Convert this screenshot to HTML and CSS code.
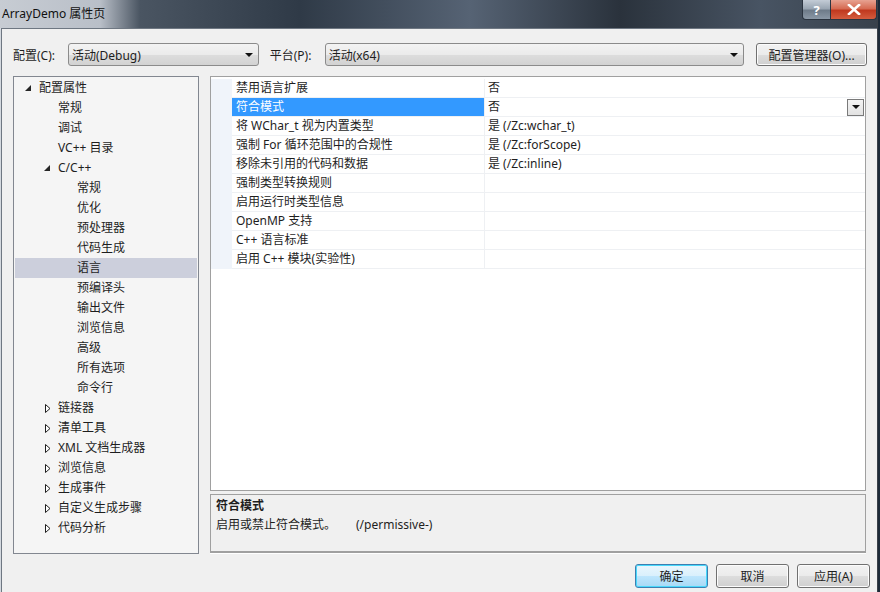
FILE: index.html
```html
<!DOCTYPE html>
<html lang="zh-CN">
<head>
    <meta charset="UTF-8">
    <title>ArrayDemo 属性页</title>
    <link rel="stylesheet" href="styles.css">
</head>
<body>
    <div class="window">
        <div class="titlebar">
            <div class="title">ArrayDemo 属性页</div>
            <div class="caption-buttons">
                <div class="cap-btn help">?</div>
                <div class="cap-btn close">
                    <svg width="14" height="11" viewBox="0 0 14 11"><path d="M2 1 L12 10 M12 1 L2 10" stroke="#fff" stroke-width="2.6" stroke-linecap="square"/></svg>
                </div>
            </div>
        </div>

        <div class="client">
            <div class="toolbar">
                <span class="tb-label">配置(C):</span>
                <div class="combo combo-config">
                    <span>活动(Debug)</span>
                    <span class="combo-arrow"></span>
                </div>
                <span class="tb-label platform-label">平台(P):</span>
                <div class="combo combo-platform">
                    <span>活动(x64)</span>
                    <span class="combo-arrow"></span>
                </div>
                <div class="btn btn-manager">配置管理器(O)...</div>
            </div>

            <div class="main">
                <div class="tree">
                    <div class="node lv0"><span class="exp"><svg width="8" height="8" viewBox="0 0 8 8"><path d="M7 1 L7 7 L1 7 Z" fill="#262626"/></svg></span>配置属性</div>
                    <div class="node lv1"><span class="exp"></span>常规</div>
                    <div class="node lv1"><span class="exp"></span>调试</div>
                    <div class="node lv1"><span class="exp"></span>VC++ 目录</div>
                    <div class="node lv1"><span class="exp"><svg width="8" height="8" viewBox="0 0 8 8"><path d="M7 1 L7 7 L1 7 Z" fill="#262626"/></svg></span>C/C++</div>
                    <div class="node lv2"><span class="exp"></span>常规</div>
                    <div class="node lv2"><span class="exp"></span>优化</div>
                    <div class="node lv2"><span class="exp"></span>预处理器</div>
                    <div class="node lv2"><span class="exp"></span>代码生成</div>
                    <div class="node lv2 selected"><span class="exp"></span>语言</div>
                    <div class="node lv2"><span class="exp"></span>预编译头</div>
                    <div class="node lv2"><span class="exp"></span>输出文件</div>
                    <div class="node lv2"><span class="exp"></span>浏览信息</div>
                    <div class="node lv2"><span class="exp"></span>高级</div>
                    <div class="node lv2"><span class="exp"></span>所有选项</div>
                    <div class="node lv2"><span class="exp"></span>命令行</div>
                    <div class="node lv1"><span class="exp"><svg class="collapsed" width="8" height="9" viewBox="0 0 8 9"><path d="M1.5 0.5 L6 4.5 L1.5 8.5 Z" fill="#fff" stroke="#1e1e1e"/></svg></span>链接器</div>
                    <div class="node lv1"><span class="exp"><svg class="collapsed" width="8" height="9" viewBox="0 0 8 9"><path d="M1.5 0.5 L6 4.5 L1.5 8.5 Z" fill="#fff" stroke="#1e1e1e"/></svg></span>清单工具</div>
                    <div class="node lv1"><span class="exp"><svg class="collapsed" width="8" height="9" viewBox="0 0 8 9"><path d="M1.5 0.5 L6 4.5 L1.5 8.5 Z" fill="#fff" stroke="#1e1e1e"/></svg></span>XML 文档生成器</div>
                    <div class="node lv1"><span class="exp"><svg class="collapsed" width="8" height="9" viewBox="0 0 8 9"><path d="M1.5 0.5 L6 4.5 L1.5 8.5 Z" fill="#fff" stroke="#1e1e1e"/></svg></span>浏览信息</div>
                    <div class="node lv1"><span class="exp"><svg class="collapsed" width="8" height="9" viewBox="0 0 8 9"><path d="M1.5 0.5 L6 4.5 L1.5 8.5 Z" fill="#fff" stroke="#1e1e1e"/></svg></span>生成事件</div>
                    <div class="node lv1"><span class="exp"><svg class="collapsed" width="8" height="9" viewBox="0 0 8 9"><path d="M1.5 0.5 L6 4.5 L1.5 8.5 Z" fill="#fff" stroke="#1e1e1e"/></svg></span>自定义生成步骤</div>
                    <div class="node lv1"><span class="exp"><svg class="collapsed" width="8" height="9" viewBox="0 0 8 9"><path d="M1.5 0.5 L6 4.5 L1.5 8.5 Z" fill="#fff" stroke="#1e1e1e"/></svg></span>代码分析</div>
                </div>

                <div class="right">
                    <div class="grid">
                        <div class="row"><div class="gutter"></div><div class="name">禁用语言扩展</div><div class="value">否</div></div>
                        <div class="row active"><div class="gutter"></div><div class="name">符合模式</div><div class="value">否<span class="drop-btn"></span></div></div>
                        <div class="row"><div class="gutter"></div><div class="name">将 WChar_t 视为内置类型</div><div class="value">是 (/Zc:wchar_t)</div></div>
                        <div class="row"><div class="gutter"></div><div class="name">强制 For 循环范围中的合规性</div><div class="value">是 (/Zc:forScope)</div></div>
                        <div class="row"><div class="gutter"></div><div class="name">移除未引用的代码和数据</div><div class="value">是 (/Zc:inline)</div></div>
                        <div class="row"><div class="gutter"></div><div class="name">强制类型转换规则</div><div class="value"></div></div>
                        <div class="row"><div class="gutter"></div><div class="name">启用运行时类型信息</div><div class="value"></div></div>
                        <div class="row"><div class="gutter"></div><div class="name">OpenMP 支持</div><div class="value"></div></div>
                        <div class="row"><div class="gutter"></div><div class="name">C++ 语言标准</div><div class="value"></div></div>
                        <div class="row"><div class="gutter"></div><div class="name">启用 C++ 模块(实验性)</div><div class="value"></div></div>
                    </div>
                    <div class="desc">
                        <div class="desc-title">符合模式</div>
                        <div class="desc-text">启用或禁止符合模式。<span class="desc-switch">(/permissive-)</span></div>
                    </div>
                </div>
            </div>

            <div class="footer">
                <div class="btn btn-ok">确定</div>
                <div class="btn btn-cancel">取消</div>
                <div class="btn btn-apply">应用(A)</div>
            </div>
        </div>
    </div>
</body>
</html>
```

FILE: styles.css
```css
body {
    margin: 0;
    padding: 0;
    width: 880px;
    height: 592px;
    overflow: hidden;
    background-color: #1d2a38;
    font-family: "Noto Sans", "Noto Sans CJK SC", sans-serif;
    font-size: 12px;
    color: #1e1e1e;
}
.window {
    width: 877px;
    height: 592px;
    display: flex;
    flex-direction: column;
    background-color: #d4d9df;
    border-right: 1px solid #3a4048;
}
.titlebar {
    height: 28px;
    display: flex;
    align-items: flex-start;
    background: linear-gradient(90deg, #c7ccd3 0, #b9bfc8 100px, #4a5562 140px, #2f3a47 300px, #566374 470px, #2a323c 620px, #485463 760px, #38414c 877px);
}
.title {
    padding-left: 2px;
    line-height: 28px;
    height: 28px;
    font-size: 12px;
    color: #111;
}
.caption-buttons {
    margin-left: auto;
    display: flex;
}
.cap-btn {
    height: 19px;
    border: 1px solid #2b3440;
    border-top: none;
    display: flex;
    align-items: center;
    justify-content: center;
    color: #fff;
    font-weight: bold;
    font-size: 13px;
}
.help {
    width: 27px;
    border-bottom-left-radius: 4px;
    background: linear-gradient(180deg, #c3ccd6 0, #9aa6b3 45%, #6f7c8a 55%, #8b98a6 100%);
}
.close {
    width: 45px;
    border-left: none;
    border-bottom-right-radius: 4px;
    background: linear-gradient(180deg, #e7a291 0, #d66b53 45%, #c0391f 55%, #d45c3e 100%);
}
.client {
    flex: 1;
    margin-left: 1px;
    border-left: 1px solid #6e7782;
    border-top: 1px solid #6e7782;
    background-color: #f0f0f0;
    padding: 0 10px 0 11px;
    display: flex;
    flex-direction: column;
}
.toolbar {
    display: flex;
    align-items: center;
    height: 23px;
    margin-top: 14px;
    margin-bottom: 10px;
}
.tb-label {
    width: 55px;
    white-space: nowrap;
}
.platform-label {
    margin-left: 11px;
}
.combo {
    height: 21px;
    border: 1px solid #8b8b8b;
    border-radius: 3px;
    background: linear-gradient(180deg, #f3f3f3 0, #ebebeb 50%, #dddddd 51%, #d2d2d2 100%);
    display: flex;
    align-items: center;
    padding-left: 3px;
}
.combo-config {
    width: 186px;
}
.combo-platform {
    width: 415px;
}
.combo-arrow {
    margin-left: auto;
    margin-right: 5px;
    width: 0;
    height: 0;
    border-left: 4px solid transparent;
    border-right: 4px solid transparent;
    border-top: 4px solid #111;
}
.btn {
    height: 21px;
    border: 1px solid #707070;
    border-radius: 3px;
    background: linear-gradient(180deg, #f2f2f2 0, #ebebeb 50%, #dddddd 51%, #cfcfcf 100%);
    display: flex;
    align-items: center;
    justify-content: center;
    box-shadow: inset 0 0 0 1px #fcfcfc;
}
.btn-manager {
    margin-left: 12px;
    width: 109px;
}
.main {
    display: flex;
    height: 478px;
}
.tree {
    width: 184px;
    border: 1px solid #828790;
    background-color: #f5f5f5;
    padding-top: 1px;
}
.node {
    height: 20px;
    line-height: 20px;
    display: flex;
    align-items: center;
    white-space: nowrap;
    margin: 0 1px;
}
.node.lv0 {
    padding-left: 9px;
}
.node.lv1 {
    padding-left: 28px;
}
.node.lv2 {
    padding-left: 47px;
}
.node.selected {
    background-color: #cccfdc;
}
.exp {
    width: 15px;
    height: 20px;
    display: flex;
    align-items: center;
}
.exp .collapsed {
    margin-left: 1px;
}
.right {
    width: 656px;
    margin-left: 11px;
    display: flex;
    flex-direction: column;
}
.grid {
    height: 413px;
    border: 1px solid #a0a0a0;
    background-color: #fff;
}
.row {
    display: flex;
    height: 18px;
    border-bottom: 1px solid #eef0f3;
    line-height: 18px;
}
.row:first-child {
    margin-top: 2px;
}
.gutter {
    width: 21px;
    background-color: #f0f4fa;
    border-bottom: 1px solid #f0f4fa;
    margin-bottom: -1px;
}
.name {
    width: 248px;
    padding-left: 4px;
    border-right: 1px solid #eef0f3;
    white-space: nowrap;
}
.value {
    flex: 1;
    padding-left: 3px;
    display: flex;
    align-items: center;
    white-space: nowrap;
}
.row.active .name {
    background-color: #3399ff;
    color: #fff;
}
.drop-btn {
    margin-left: auto;
    margin-right: 1px;
    width: 15px;
    height: 15px;
    border: 1px solid #7a7a7a;
    background: linear-gradient(180deg, #f4f4f4 0, #e2e2e2 100%);
    display: flex;
    align-items: center;
    justify-content: center;
}
.drop-btn::after {
    content: "";
    width: 0;
    height: 0;
    border-left: 4px solid transparent;
    border-right: 4px solid transparent;
    border-top: 4px solid #111;
}
.desc {
    height: 55px;
    margin-top: 3px;
    border: 1px solid #a0a0a0;
    border-bottom: 2px solid #a0a0a0;
    box-shadow: 0 1px 0 #fff;
    background-color: #f0f0f0;
    padding: 1px 5px 0;
}
.desc-title {
    font-weight: bold;
    line-height: 19px;
}
.desc-text {
    line-height: 19px;
}
.desc-switch {
    margin-left: 20px;
}
.footer {
    display: flex;
    justify-content: flex-end;
    margin-top: 10px;
    margin-right: -3px;
    gap: 8px;
}
.footer .btn {
    width: 71px;
    height: 22px;
}
.btn-ok {
    border-color: #3c7fb1;
    box-shadow: inset 0 0 0 1px #48d8fb;
    background: linear-gradient(180deg, #eaf6fd 0, #d9f0fc 50%, #bee6fd 51%, #a7d9f5 100%);
}
```
